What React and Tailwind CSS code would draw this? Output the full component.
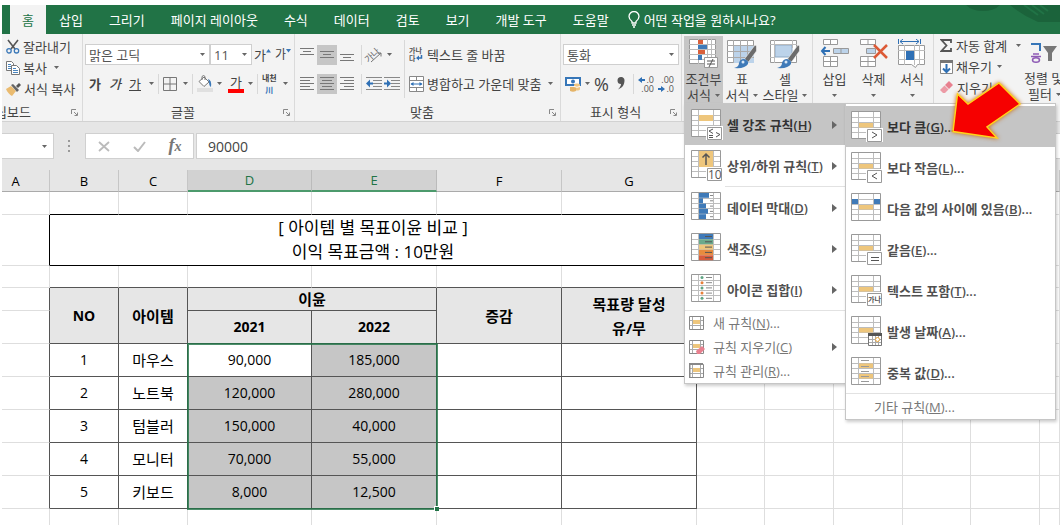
import React from 'react';

const tabs = ['삽입', '그리기', '페이지 레이아웃', '수식', '데이터', '검토', '보기', '개발 도구', '도움말'];

const rows = [
    { no: 1, item: '마우스', a: '90,000', b: '185,000' },
    { no: 2, item: '노트북', a: '120,000', b: '280,000' },
    { no: 3, item: '텀블러', a: '150,000', b: '40,000' },
    { no: 4, item: '모니터', a: '70,000', b: '55,000' },
    { no: 5, item: '키보드', a: '8,000', b: '12,500' },
];

const Caret = () => (
    <svg width="5" height="3" viewBox="0 0 5 3" className="shrink-0"><path d="M0 0h5L2.5 3z" fill="#666" /></svg>
);

const Launcher = () => (
    <svg width="7" height="7" viewBox="0 0 7 7" fill="none" stroke="#888">
        <path d="M.5 5V.5H5M3 3l3 3M6.5 3.5v3h-3" />
    </svg>
);

const Group = ({ label, className, launcher, clipped, children }) => (
    <section aria-label={label} className={`flex flex-col border-r border-[#dadada] ${className}`}>
        <div className="flex-1">{children}</div>
        <div className="flex h-[18px] items-center pr-1">
            <div className={`flex min-w-0 flex-1 overflow-hidden ${clipped ? 'justify-end pr-10' : 'justify-center'}`}>
                <span className="shrink-0">{label}</span>
            </div>
            {launcher && <button aria-label={`${label} 설정`}><Launcher /></button>}
        </div>
    </section>
);

const Divider = () => <span className="mx-1 h-5 w-px shrink-0 bg-[#d8d8d8]" />;

// Horizontal strokes, one [start, end] pair for each line
const Lines = ({ lines, top = 1, step = 3 }) => (
    <svg width="14" height="16" viewBox="0 0 14 16" stroke="#777" fill="none">
        {lines.map(([a, b], i) => <path key={i} d={`M${a} ${top + i * step + 0.5}H${b}`} />)}
    </svg>
);

const LineButton = ({ label, active, ...rest }) => (
    <button aria-label={label} className={`flex h-5 w-5 items-center justify-center ${active ? 'bg-[#c6c6c6]' : ''}`}>
        <Lines {...rest} />
    </button>
);

const Select = ({ label, value, className }) => (
    <label className={`relative flex h-[21px] items-center border border-[#cfcfcf] bg-white ${className}`}>
        <select aria-label={label} defaultValue={value} className="w-full appearance-none bg-transparent pl-[3px] leading-5 text-[#555] outline-none">
            <option>{value}</option>
        </select>
        <span className="pointer-events-none absolute right-1"><Caret /></span>
    </label>
);

/* ---- ribbon icons ---- */

const CutIcon = () => (
    <svg width="14" height="15" viewBox="0 0 14 15" fill="none">
        <path d="M2 1l7 9M12 1L5 10" stroke="#555" strokeWidth="1.6" />
        <circle cx="3" cy="11.8" r="2.2" stroke="#3b78b8" strokeWidth="1.3" />
        <circle cx="10.5" cy="11.8" r="2.2" stroke="#3b78b8" strokeWidth="1.3" />
    </svg>
);

const CopyIcon = () => (
    <svg width="14" height="15" viewBox="0 0 14 15" fill="#fff" stroke="#777">
        <path d="M.5 1.5h5l2 2v7h-7z" /><path d="M2 4.5h3M2 6.5h3M2 8.5h3" stroke="#4a84bd" />
        <path d="M5.500 5.500h5l3 3v6h-8z" /><path d="M7 8.500h3M7 10.500h5M7 12.500h5" stroke="#4a84bd" />
    </svg>
);

const PainterIcon = () => (
    <svg width="15" height="14" viewBox="0 0 15 14">
        <path d="M0 7l5-3 5 5-4 5C4 13 1 10 0 7z" fill="#eabb70" />
        <path d="M5 3l2-1 6 6-2 2z" fill="#666" /><path d="M10 4l3-3 2 2-3 3z" fill="#555" />
    </svg>
);

const GrowIcon = ({ down }) => (
    <svg width="5" height="4" viewBox="0 0 5 4" className="mb-2"><path d={down ? 'M0 0h5L2.500 3.500z' : 'M0 3.500h5L2.500 0z'} fill="#3b78b8" /></svg>
);

const BorderIcon = () => (
    <svg width="14" height="14" viewBox="0 0 14 14" fill="none" stroke="#777"><path d="M.5.5h13v13H.5zM7 0v14M0 7h14" /></svg>
);

const FillIcon = () => (
    <svg width="16" height="17" viewBox="0 0 16 17">
        <path d="M2 6.500L7 2l5 5-5 4.500z" fill="#fff" stroke="#777" /><path d="M5 5V1.500q1.500-2 3 0V5" fill="none" stroke="#777" />
        <path d="M11 4q4 1 3 8-2-1-2-5z" fill="#3b78b8" /><path d="M0 13h16v4H0z" fill="#e0e0e0" />
    </svg>
);

const OrientationIcon = () => (
    <svg width="17" height="16" viewBox="0 0 17 16" className="overflow-visible">
        <text x="-1" y="12" fontSize="9" fill="#666" transform="rotate(-42 6 10)">가나</text>
        <path d="M5 15L15 6M15 9.500V6h-3.500" fill="none" stroke="#777" />
    </svg>
);

const IndentIcon = ({ left }) => (
    <svg width="16" height="16" viewBox="0 0 16 16">
        <path d="M0 1.500h16M7 4.500h9M7 7.500h9M7 10.500h9M0 13.500h16" stroke="#888" />
        <path d={left ? 'M0 7.500l4-4v3h3v2H4v3z' : 'M7 7.500l-4-4v3H0v2h3v3z'} fill="#2f70b5" />
    </svg>
);

const WrapIcon = () => (
    <svg width="15" height="15" viewBox="0 0 15 15">
        <text x="0" y="6" fontSize="7" fontWeight="bold" fill="#555">가나</text>
        <text x="0" y="14" fontSize="7" fontWeight="bold" fill="#555">다</text>
        <path d="M12.500 8v3H9" stroke="#2f70b5" strokeWidth="1.500" fill="none" /><path d="M7 11l3-2.500v5z" fill="#2f70b5" />
    </svg>
);

const MergeIcon = () => (
    <svg width="15" height="16" viewBox="0 0 15 16" fill="none">
        <path d="M.5.5h14v15H.5zM0 4.500h15M0 11.500h15M7.500 0v4M7.500 12v4" stroke="#888" fill="#fff" />
        <path d="M2 8h11" stroke="#2f70b5" /><path d="M1.500 8L4.500 6v4zM13.500 8l-3-2v4z" fill="#2f70b5" />
    </svg>
);

const CurrencyIcon = () => (
    <svg width="16" height="16" viewBox="0 0 16 16">
        <path d="M0 1h16v9H0z" fill="#3676b8" /><path d="M2 3h12v5H2z" fill="#fff" /><circle cx="8" cy="5.500" r="2" fill="#3676b8" />
        <path d="M9 9c0-2 6-2 6 0v4c0 2-6 2-6 0z" fill="#f0c681" /><path d="M5 11h6v4q-3 1.500-6 0z" fill="#e5b468" />
        <path d="M9 10.500q3 1.500 6 0" stroke="#fff" fill="none" />
    </svg>
);

const DecimalIcon = ({ increase }) => (
    <svg width="16" height="18" viewBox="0 0 16 18" fontSize="9" fill="#555" className="overflow-visible">
        <text x="16" y="8" textAnchor="end">{increase ? '.0' : '.00'}</text>
        <text x="16" y="17" textAnchor="end">{increase ? '.00' : '.0'}</text>
        {increase
            ? <path d="M0 5l4-3v2h3v2H4v2z" fill="#2f70b5" />
            : <path d="M7 14l-4-3v2H0v2h3v2z" fill="#2f70b5" />}
    </svg>
);

const ConditionalIcon = () => (
    <svg width="30" height="30" viewBox="0 0 30 30">
        <path d="M.5.5h26v24H.5z" fill="#fff" stroke="#999" />
        <path d="M0 5.500h27M0 10.500h27M0 15.500h27M0 20.500h27M9.500 0v25M18.500 0v25M22.500 0v25" stroke="#bbb" />
        <path d="M9 1h5v4H9zM9 11h7v4H9z" fill="#d9603b" /><path d="M9 6h9v4H9zM9 16h4v5H9z" fill="#3f7ab8" />
        <path d="M15.500 18.500h13v10h-13z" fill="#fff" stroke="#999" /><path d="M18 22h8M18 25h8M24 20l-4 8" stroke="#555" />
    </svg>
);

const BrushTableIcon = ({ cell }) => (
    <svg width="30" height="30" viewBox="0 0 30 30">
        <path d="M.5 1.500h26v22H.5z" fill="#fff" stroke="#999" />
        {cell ? <path d="M5 6h17v12H5z" fill="#bcd3ea" stroke="#8fa9c4" /> : <path d="M7 7h20v17H7z" fill="#bcd3ea" />}
        {cell
            ? <path d="M0 5.500h27M0 18.500h5M4.500 1v23M22.500 1v8" stroke="#bbb" />
            : <path d="M0 6.500h27M0 12.500h27M0 18.500h27M6.500 1v23M13.500 1v23M20.500 1v23" stroke="#aaa" />}
        <path d="M28 6l1.500 1v5l-8 11-4-3z" fill="#6b6b6b" stroke="#f3f3f3" strokeWidth=".6" />
        <path d="M17 20q5 1 4 5-3 5-14 4 5-1 5-5 1-4 5-4z" fill="#3f7ab8" /><circle cx="16" cy="23" r="1.500" fill="#d6e6f5" />
    </svg>
);

const InsertIcon = () => (
    <svg width="30" height="30" viewBox="0 0 30 30" fill="#fff" stroke="#999">
        <path d="M3.500.5h14v5h-14zM10.500.5v5M3.500 17.500h14v10h-14zM10.500 17v11M3 22.500h15" />
        <path d="M13.500 9.500h15v5h-15zM21 9v6" fill="#bcd3ea" /><path d="M10 12H2M5.500 8L2 12l3.500 4" stroke="#2f70b5" strokeWidth="2" fill="none" />
    </svg>
);

const DeleteIcon = () => (
    <svg width="30" height="30" viewBox="0 0 30 30" fill="#fff" stroke="#999">
        <path d="M1.500.5h15v5h-15zM9 .5v5M1.500 17.500h15v10h-15zM9 17v11M1 22.500h16" />
        <path d="M7.500 9.500h9v5h-9z" fill="#bcd3ea" /><path d="M15 6l13 13M28 6L15 19" stroke="#dc5a36" strokeWidth="2.500" />
    </svg>
);

const FormatIcon = () => (
    <svg width="28" height="30" viewBox="0 0 28 30">
        <path d="M.5 0v5M22.500 0v5" stroke="#2f70b5" /><path d="M2 2.500h19M5 0L2 2.500 5 5M18 0l3 2.500L18 5" stroke="#2f70b5" fill="none" />
        <path d="M.5 6.500h26v19h-7l-2 3-4-3H.5z" fill="#fff" stroke="#999" />
        <path d="M0 11.500h27M0 20.500h27M6.500 6v20M16.500 6v20M21.500 6v20" stroke="#bbb" /><path d="M8 12h8v9H8z" fill="#2f70b5" />
    </svg>
);

const SumIcon = () => (
    <svg width="13" height="13" viewBox="0 0 13 13"><path d="M11 4V1H1.500L6.500 6.500 1.500 12H11V9" fill="none" stroke="#555" strokeWidth="1.800" /></svg>
);

const DownIcon = () => (
    <svg width="13" height="14" viewBox="0 0 13 14">
        <path d="M.5.5h12v13H.5z" fill="#fff" stroke="#888" /><path d="M0 0h13v3H0z" fill="#777" />
        <path d="M6.500 4v8M3 8.500l3.500 3.500L10 8.500" fill="none" stroke="#2f70b5" strokeWidth="2" />
    </svg>
);

const EraserIcon = () => (
    <svg width="14" height="13" viewBox="0 0 14 13"><path d="M9 0l4 4-4 4-4-4z" fill="#e8808f" /><path d="M4.500 4.500l4 4L5 12H3L0 9z" fill="#ec9ba6" /></svg>
);

const SortIcon = () => (
    <svg width="28" height="22" viewBox="0 0 28 22">
        <path d="M1 2h9v7" fill="none" stroke="#3676b8" strokeWidth="2" />
        <path d="M3 12h6M1 14.500h10" stroke="#8e5bb5" strokeWidth="1.500" /><ellipse cx="6" cy="18" rx="3.500" ry="2.300" fill="none" stroke="#8e5bb5" strokeWidth="1.500" />
        <path d="M13 4h14l-5 7v8h-4v-8z" fill="#777" />
    </svg>
);

/* ---- menu icons ---- */

const SheetIcon = ({ children }) => (
    <svg width="32" height="31" viewBox="0 0 32 31" className="shrink-0">
        <path d="M.5.5h29v27H.5z" fill="#fff" stroke="#999" />
        <path d="M1 6.500h28M1 11.500h28M1 16.500h28M1 21.500h28M7.500 1v26M22.500 1v26" stroke="#bdbdbd" />
        {children}
    </svg>
);

const Badge = ({ children }) => (
    <>
        <path d="M15 17h17v14H15z" fill="#fff" />
        <path d="M16.500 18.500h14v12h-14z" fill="#fff" stroke="#999" />
        <g stroke="#555" fill="none">{children}</g>
    </>
);

const Mid = ({ y = 12 }) => <path d={`M8 ${y}h14v4.500H8z`} fill="#eec67c" />;

const SmallSheet = ({ children }) => (
    <svg width="16" height="16" viewBox="0 0 16 16" className="shrink-0">
        <path d="M.5 1.500h14v13H.5z" fill="#fff" stroke="#888" />
        <path d="M1 5.500h13M1 10.500h13M3.500 2v12M11.500 2v12" stroke="#aaa" /><path d="M4 5h7v4H4z" fill="#eec67c" />
        {children}
    </svg>
);

const barRows = [10, 4, 7, 9, 7];
const scaleColors = ['#3f7ab8', '#6aaa8c', '#eec67c', '#e88b3e', '#d85c3c'];

const mainItems = [
    { label: '셀 강조 규칙', k: 'H', open: true, icon: <SheetIcon><path d="M8 6h14v6H8z" fill="#eec67c" /><Badge><path d="M22 20l-4 2 4 2.500M25 23.500l4 2-4 2.500M18 26.500h4M18 28.500h4" /></Badge></SheetIcon> },
    { label: '상위/하위 규칙', k: 'T', icon: <SheetIcon><path d="M8 1h14v16H8z" fill="#eec67c" /><path d="M15 15V4M11.500 7.500L15 4l3.500 3.500" stroke="#555" strokeWidth="1.500" fill="none" /><Badge><text x="17" y="29" fontSize="12" fontWeight="normal" fill="#555" stroke="none">10</text></Badge></SheetIcon> },
    { label: '데이터 막대', k: 'D', icon: <SheetIcon>{barRows.map((w, i) => <g key={i}><path d={`M8 ${1 + i * 5.3}h${w}v4.800h-${w}z`} fill="#3f7ab8" /><path d={`M19 ${3.5 + i * 5.3}h3`} stroke="#888" /></g>)}</SheetIcon> },
    { label: '색조', k: 'S', icon: <SheetIcon>{scaleColors.map((c, i) => <g key={c}><path d={`M8 ${1 + i * 5.3}h14v5H8z`} fill={c} /><path d={`M14 ${3.5 + i * 5.3}h7`} stroke="#555" /></g>)}</SheetIcon> },
    { label: '아이콘 집합', k: 'I', icon: <SheetIcon>{[0, 1, 2, 3, 4].map((i) => <g key={i}><circle cx="11" cy={3.5 + i * 5.2} r="1.500" fill={i % 2 ? '#e8803a' : '#5fa583'} /><path d={`M15 ${3.5 + i * 5.2}h6`} stroke="#888" /></g>)}</SheetIcon> },
];

const smallItems = [
    { label: '새 규칙', k: 'N', dots: true, icon: <SmallSheet /> },
    { label: '규칙 지우기', k: 'C', sub: true, icon: <SmallSheet><path d="M7 12l6-5 3 3-5 5H8z" fill="#e8808f" /></SmallSheet> },
    { label: '규칙 관리', k: 'R', dots: true, icon: <SmallSheet><path d="M.5 15V.5H14" stroke="#888" strokeWidth="2" fill="none" /></SmallSheet> },
];

const subItems = [
    { label: '보다 큼', k: 'G', open: true, icon: <SheetIcon><Mid /><Badge><path d="M21 21l5 3-5 3" /></Badge></SheetIcon> },
    { label: '보다 작음', k: 'L', icon: <SheetIcon><Mid /><Badge><path d="M26 21l-5 3 5 3" /></Badge></SheetIcon> },
    { label: '다음 값의 사이에 있음', k: 'B', icon: <SheetIcon><Mid /><path d="M1 6h6v5H1zM23 6h6v5h-6z" fill="#3f7ab8" /></SheetIcon> },
    { label: '같음', k: 'E', icon: <SheetIcon><Mid /><Badge><path d="M20 23.500h8M20 26.500h8" /></Badge></SheetIcon> },
    { label: '텍스트 포함', k: 'T', icon: <SheetIcon><Mid /><Badge><text x="17" y="27" fontSize="7" fontWeight="bold" fill="#555" stroke="none">가나</text></Badge></SheetIcon> },
    { label: '발생 날짜', k: 'A', icon: <SheetIcon><Mid /><path d="M17.500 18.500h13v11h-13z" fill="#fff" stroke="#777" /><path d="M17 17h14v3H17z" fill="#555" /><path d="M18 23.500h12M18 26.500h12M21.500 20v9M24.500 20v9M27.500 20v9" stroke="#aaa" /><circle cx="26.500" cy="23.500" r="2" fill="#fff" stroke="#e8a43a" /></SheetIcon> },
    { label: '중복 값', k: 'D', icon: <SheetIcon><Mid y={6.5} /><Mid y={17} />{[3, 9, 14, 19, 24].map((y) => <path key={y} d={`M10 ${y + 0.5}h8`} stroke="#999" />)}</SheetIcon> },
];

const ItemText = ({ label, k, dots }) => <span>{label}(<u>{k}</u>){dots && '...'}</span>;

const SubArrow = () => (
    <svg width="5" height="8" viewBox="0 0 5 8" className="mr-2 ml-auto"><path d="M0 0l5 4-5 4z" fill="#666" /></svg>
);

const menuBox = 'absolute z-10 border border-[#c6c6c6] bg-white shadow-[1px_2px_3px_rgba(0,0,0,0.2)]';

const SubMenu = () => (
    <ul className={`${menuBox} -top-px left-full w-[211px] pt-0.5`}>
        {subItems.map((it) => (
            <li key={it.k}>
                <button className={`flex h-[41px] w-full items-center gap-1 pl-[5px] font-semibold ${it.open ? 'bg-[#c5c5c5] text-[#333]' : 'text-[#505050]'}`}>
                    {it.icon}
                    <ItemText {...it} dots />
                </button>
            </li>
        ))}
        <li className="border-t border-[#e2e2e2]">
            <button className="flex h-[25px] w-full items-center pl-7 text-[#777]"><ItemText label="기타 규칙" k="M" dots /></button>
        </li>
        <li aria-hidden="true" className="pointer-events-none absolute -top-7 left-[98px]">
            <svg width="84" height="70" viewBox="944 76 84 70" className="drop-shadow-[0_0_2px_#c86a10]">
                <path d="M957.500 94L968 104l31-21 21 21-33 23 10 11-44-6.500z" fill="#f60000" stroke="#ffd21c" strokeWidth="1.500" />
            </svg>
        </li>
    </ul>
);

const Menu = () => (
    <ul className={`${menuBox} top-full left-0 w-[162px]`}>
        {mainItems.map((it) => (
            <li key={it.k} className="relative">
                <button className={`flex h-[41px] w-full items-center gap-1 pl-[6px] font-semibold ${it.open ? 'bg-[#c5c5c5] text-[#333]' : 'text-[#505050]'}`}>
                    {it.icon}
                    <ItemText {...it} />
                    <SubArrow />
                </button>
                {it.k === 'T' && <div className="ml-10 h-px bg-[#e2e2e2]" />}
                {it.open && <SubMenu />}
            </li>
        ))}
        <li className="border-t border-[#e2e2e2]" />
        {smallItems.map((it) => (
            <li key={it.k}>
                <button className="flex h-6 w-full items-center gap-2 pl-1 text-[#777]">
                    {it.icon}
                    <ItemText {...it} />
                    {it.sub && <SubArrow />}
                </button>
            </li>
        ))}
    </ul>
);

const BigButton = ({ icon, top, bottom, active, className }) => (
    <button className={`flex h-[67px] flex-col items-center pt-[3px] leading-4 whitespace-nowrap ${active ? 'bg-[#c6c6c6]' : ''} ${className}`}>
        <span className="flex h-8 shrink-0 items-start">{icon}</span>
        <span>{top}</span>
        <span className="flex h-4 items-center gap-1">{bottom}<Caret /></span>
    </button>
);

const Ribbon = () => (
    <div className="flex h-[88px] border-b border-[#d2d2d2] bg-[#f3f3f3] whitespace-nowrap text-[#444]">
        <Group label="클립보드" launcher clipped className="w-[81px] shrink-0">
            <div className="flex flex-col pt-0.5 pl-1">
                <button className="flex h-[21px] items-center gap-[3px]"><CutIcon />잘라내기</button>
                <button className="flex h-[21px] items-center gap-[3px]"><CopyIcon />복사<span className="ml-1"><Caret /></span></button>
                <button className="flex h-[21px] items-center gap-[3px]"><PainterIcon />서식 복사</button>
            </div>
        </Group>

        <Group label="글꼴" launcher className="w-[212px] shrink-0">
            <div className="flex flex-col gap-2 pt-2.5 pl-0.5">
                <div className="flex items-center">
                    <Select label="글꼴 이름" value="맑은 고딕" className="w-[125px]" />
                    <Select label="글꼴 크기" value="11" className="w-[42px]" />
                    <button aria-label="글꼴 크게" className="ml-0.5 flex items-center">가<GrowIcon /></button>
                    <button aria-label="글꼴 작게" className="ml-1 flex items-center text-xs">가<GrowIcon down /></button>
                </div>
                <div className="flex h-[21px] items-center">
                    <button className="w-5 font-bold">가</button>
                    <button className="w-5 font-medium italic">가</button>
                    <button className="mr-1 w-5 underline">가</button>
                    <Caret />
                    <Divider />
                    <button aria-label="테두리" className="mr-1.5"><BorderIcon /></button><Caret />
                    <Divider />
                    <button aria-label="채우기 색" className="mr-1"><FillIcon /></button><Caret />
                    <button aria-label="글꼴 색" className="mr-1 ml-1.5 h-[18px] w-4 border-b-4 border-[#ff0000] leading-[14px]">가</button><Caret />
                    <Divider />
                    <button className="mr-1.5 flex flex-col items-center text-[8px] leading-3 font-bold"><span>내천</span><span className="text-[#2f70b5]">川</span></button><Caret />
                </div>
            </div>
        </Group>

        <Group label="맞춤" launcher className="w-[266px] shrink-0">
            <div className="flex">
                <div className="flex flex-col gap-2 pt-2.5 pl-0.5">
                    <div className="flex h-[21px] items-center">
                        <LineButton label="위쪽 맞춤" lines={[[0, 14], [3, 11], [0, 14]]} />
                        <LineButton label="가운데 맞춤" active lines={[[0, 14], [3, 11], [0, 14]]} top={4} />
                        <LineButton label="아래쪽 맞춤" lines={[[0, 14], [3, 11], [0, 14]]} top={7} />
                        <Divider />
                        <button aria-label="방향" className="mr-1"><OrientationIcon /></button><Caret />
                    </div>
                    <div className="flex h-[21px] items-center">
                        <LineButton label="왼쪽 맞춤" lines={[[0, 14], [0, 10], [0, 14], [0, 10], [0, 14]]} />
                        <LineButton label="가로 가운데 맞춤" active lines={[[0, 14], [2, 12], [0, 14], [2, 12], [0, 14]]} />
                        <LineButton label="오른쪽 맞춤" lines={[[0, 14], [4, 14], [0, 14], [4, 14], [0, 14]]} />
                        <Divider />
                        <button aria-label="내어쓰기"><IndentIcon left /></button>
                        <button aria-label="들여쓰기" className="ml-0.5"><IndentIcon /></button>
                    </div>
                </div>
                <div className="mt-1.5 ml-1 flex h-[58px] flex-col gap-2 border-l border-[#d8d8d8] pt-1 pl-1">
                    <button className="flex h-[21px] items-center gap-[3px]"><WrapIcon />텍스트 줄 바꿈</button>
                    <button className="flex h-[21px] items-center gap-[3px]"><MergeIcon />병합하고 가운데 맞춤<span className="ml-1"><Caret /></span></button>
                </div>
            </div>
        </Group>

        <Group label="표시 형식" launcher className="w-[121px] shrink-0">
            <div className="flex flex-col gap-2 pt-2.5 pl-0.5">
                <Select label="표시 형식" value="통화" className="w-[116px]" />
                <div className="flex h-[21px] items-center pl-0.5">
                    <button aria-label="회계 표시 형식" className="mr-1"><CurrencyIcon /></button><Caret />
                    <button className="ml-1 text-lg">%</button>
                    <button aria-label="쉼표 스타일" className="mx-2">
                        <svg width="8" height="13" viewBox="0 0 8 13"><path d="M4 0a3.300 3.300 0 013.500 3.500C7.500 8 5 11 1 12.500c2-2 3-4 3-5.500A3.500 3.500 0 014 0z" fill="#555" /></svg>
                    </button>
                    <span className="mr-1 h-5 w-px bg-[#d8d8d8]" />
                    <button aria-label="자릿수 늘림"><DecimalIcon increase /></button>
                    <button aria-label="자릿수 줄임" className="ml-1"><DecimalIcon /></button>
                </div>
            </div>
        </Group>

        <div className="flex w-[131px] shrink-0 items-start border-r border-[#dadada] pt-0.5 pl-[2px]">
            <div className="relative">
                <BigButton icon={<ConditionalIcon />} top="조건부" bottom="서식" active className="w-[39px]" />
                <Menu />
            </div>
            <BigButton icon={<BrushTableIcon />} top="표" bottom="서식" className="w-[38px]" />
            <BigButton icon={<BrushTableIcon cell />} top="셀" bottom="스타일" className="w-[48px]" />
        </div>

        <div className="flex w-[121px] shrink-0 items-start border-r border-[#dadada] pt-0.5 pl-0.5">
            <BigButton icon={<InsertIcon />} top="삽입" className="w-[39px]" />
            <BigButton icon={<DeleteIcon />} top="삭제" className="w-[39px]" />
            <BigButton icon={<FormatIcon />} top="서식" className="w-[38px]" />
        </div>

        <div className="flex min-w-0 flex-1 overflow-hidden pl-1.5">
            <div className="flex w-[84px] shrink-0 flex-col pt-px">
                <button className="flex h-[21px] items-center gap-[3px]"><SumIcon />자동 합계<span className="ml-1.5"><Caret /></span></button>
                <button className="flex h-[21px] items-center gap-[3px]"><DownIcon />채우기<span className="ml-0.5"><Caret /></span></button>
                <button className="flex h-[21px] items-center gap-[3px]"><EraserIcon />지우기</button>
            </div>
            <button className="flex shrink-0 flex-col pt-2 leading-4">
                <span className="ml-1.5 h-7"><SortIcon /></span>
                <span>정렬 및</span>
                <span className="ml-1 flex h-4 items-center gap-1">필터<Caret /></span>
            </button>
        </div>
    </div>
);

const FormulaBar = () => (
    <div className="flex h-12 items-center bg-[#e6e6e6]">
        <div className="flex h-[26px] w-[52px] items-center justify-end border border-l-0 border-[#d0d0d0] bg-white pr-1.5"><Caret /></div>
        <svg width="3" height="12" viewBox="0 0 3 12" className="mx-[14px]" fill="#999"><path d="M0 0h2v2H0zM0 5h2v2H0zM0 10h2v2H0z" /></svg>
        <div className="flex h-[26px] w-[109px] items-center justify-around border border-[#d0d0d0] bg-white">
            <button aria-label="취소"><svg width="12" height="11" viewBox="0 0 12 11" stroke="#bbb" strokeWidth="1.800"><path d="M1 1l10 9M11 1L1 10" /></svg></button>
            <button aria-label="입력"><svg width="13" height="11" viewBox="0 0 13 11" fill="none" stroke="#bbb" strokeWidth="2"><path d="M1 6l4 4 7-9" /></svg></button>
            <button aria-label="함수 삽입" className="font-['Liberation_Serif',serif] text-lg leading-5 font-bold text-[#777] italic">f<span className="text-sm">x</span></button>
        </div>
        <input aria-label="수식" defaultValue="90000" className="ml-0.5 h-[26px] min-w-0 flex-1 border border-r-0 border-[#d0d0d0] bg-white pl-[11px] text-sm text-[#444] outline-none" />
    </div>
);

const grid = 'border-r border-b border-[#dedede]';
const dark = 'border-r border-b border-[#555]';

const Blank = ({ count }) => Array.from({ length: count }, (_, i) => <td key={i} className={grid} />);

const Sheet = () => (
    <table className="w-full table-fixed border-separate border-spacing-0 bg-white text-center text-sm leading-5 text-black">
        <colgroup>
            <col className="w-[48px]" />
            <col className="w-[69px]" />
            <col className="w-[69px]" />
            <col className="w-[124px]" />
            <col className="w-[125px]" />
            <col className="w-[125px]" />
            <col className="w-[135px]" />
            <col className="w-[68px]" />
            <col className="w-[69px]" />
            <col className="w-[69px]" />
            <col className="w-[68px]" />
            <col className="w-[69px]" />
            <col />
        </colgroup>
        <thead>
            <tr className="h-[22px] text-[13px]">
                {['A', 'B', 'C', 'D', 'E', 'F', 'G', '', '', '', '', '', ''].map((c, i) => (
                    <th
                        key={i}
                        className={`border-r p-0 font-normal ${c === 'D' || c === 'E'
                            ? 'border-b-2 border-r-[#bbb] border-b-[#4c9a6c] bg-[#d2d2d2] text-[#217346]'
                            : 'border-b border-r-[#c6c6c6] border-b-[#aaa] bg-[#e6e6e6]'} ${c === 'A' ? 'pr-5' : ''}`}
                    >
                        {c}
                    </th>
                ))}
            </tr>
        </thead>
        <tbody>
            <tr className="h-[23px]">
                <td className={grid} />
                {[1, 2, 3, 4, 5, 6].map((n) => <td key={n} className="border-r border-b border-r-[#dedede] border-b-black" />)}
                <Blank count={6} />
            </tr>
            <tr className="h-[51px]">
                <td className="border-r border-b border-r-black border-b-[#dedede]" />
                <td colSpan={6} className="border-r border-b border-black p-0 text-[17px] leading-6">
                    [ 아이템 별 목표이윤 비교 ]<br />이익 목표금액 : 10만원
                </td>
                <Blank count={6} />
            </tr>
            <tr className="h-[22px]">
                <td className={grid} />
                {[1, 2, 3, 4, 5, 6].map((n) => <td key={n} className="border-r border-b border-r-[#dedede] border-b-[#555]" />)}
                <Blank count={6} />
            </tr>
            <tr className="h-[23px] bg-[#e6e6e6] text-[15px]">
                <td className="border-r border-b border-r-[#555] border-b-[#dedede] bg-white" />
                <th rowSpan={2} className={`${dark} p-0 text-sm`}>NO</th>
                <th rowSpan={2} className={`${dark} p-0`}>아이템</th>
                <th colSpan={2} className={`${dark} p-0`}>이윤</th>
                <th rowSpan={2} className={`${dark} p-0`}>증감</th>
                <th rowSpan={2} className={`${dark} p-0 leading-6`}>목표량 달성<br />유/무</th>
                {[1, 2, 3, 4, 5, 6].map((n) => <td key={n} className={`${grid} bg-white`} />)}
            </tr>
            <tr className="h-[33px] bg-[#e6e6e6]">
                <td className="border-r border-b border-r-[#555] border-b-[#dedede] bg-white" />
                <th className={`${dark} p-0`}>2021</th>
                <th className={`${dark} p-0`}>2022</th>
                {[1, 2, 3, 4, 5, 6].map((n) => <td key={n} className={`${grid} bg-white`} />)}
            </tr>
            {rows.map((r, i) => (
                <tr key={r.no} className="h-[33px]">
                    <td className="border-r border-b border-r-[#555] border-b-[#dedede]" />
                    <td className={`${dark} p-0`}>{r.no}</td>
                    <td className={`${dark} p-0 text-[15px]`}>{r.item}</td>
                    <td className={`${dark} p-0 ${i === 0 ? 'relative' : 'bg-[#c6c6c6]'}`}>
                        {r.a}
                        {i === 0 && (
                            <div className="pointer-events-none absolute -top-px -left-px h-[167px] w-[251px] border-2 border-[#217346]/80">
                                <span className="absolute -right-[3px] -bottom-[3px] h-[5px] w-[5px] border-t border-l border-white bg-[#217346]" />
                            </div>
                        )}
                    </td>
                    <td className={`${dark} bg-[#c6c6c6] p-0`}>{r.b}</td>
                    <td className={dark} />
                    <td className={dark} />
                    <Blank count={6} />
                </tr>
            ))}
            <tr className="h-4">
                {Array.from({ length: 13 }, (_, n) => <td key={n} className="border-r border-[#dedede]" />)}
            </tr>
        </tbody>
    </table>
);

const App = () => {
    return (
        <div className="overflow-hidden bg-white pt-[5px] pl-0.5 font-['Open_Sans','Noto_Sans_CJK_KR',sans-serif] text-[13px] leading-5">
            <nav className="relative flex h-[29px] items-stretch bg-[#217346] pl-2 text-white">
                <svg width="130" height="17" viewBox="0 0 130 17" className="absolute top-0 right-0" fill="#1b633b">
                    <path d="M36 0h34q-6 6-17 6T36 0zM80 0h50v17h-22Q92 10 80 0z" />
                    <path d="M94 0l14 10M102 0l12 9M110 0l8 6" stroke="#217346" strokeWidth="2" />
                </svg>
                <button className="bg-[#f3f3f3] px-3 text-[#217346]">홈</button>
                {tabs.map((t) => <button key={t} className="px-[13px] whitespace-nowrap">{t}</button>)}
                <button className="ml-1.5 flex items-center gap-1 whitespace-nowrap">
                    <svg width="12" height="17" viewBox="0 0 12 17" fill="none" stroke="#fff" strokeWidth="1.300">
                        <path d="M4 12V10.500C2 9 1 7.500 1 5.500a5 5 0 0110 0c0 2-1 3.500-3 5V12zM4 14h4M5 16h2" />
                    </svg>
                    어떤 작업을 원하시나요?
                </button>
            </nav>
            <Ribbon />
            <FormulaBar />
            <Sheet />
        </div>
    );
};

export default App;
